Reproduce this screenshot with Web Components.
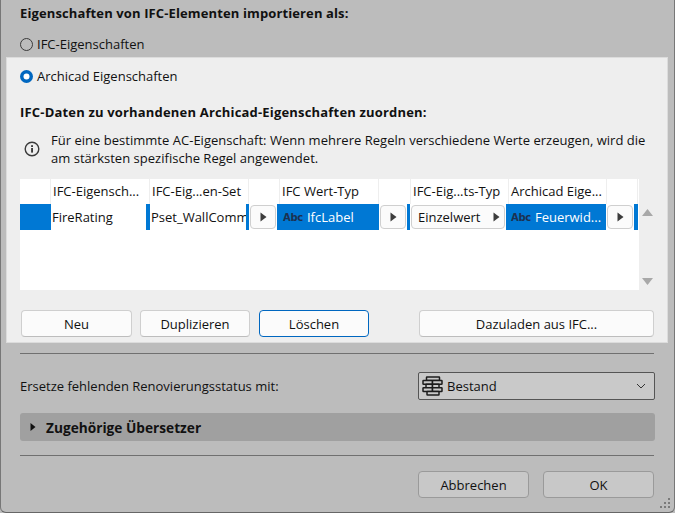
<!DOCTYPE html>
<html lang="de">
<head>
<meta charset="utf-8">
<title>IFC</title>
<style>
  html, body { margin: 0; padding: 0; background: #bcbcbc; }
  body { font-family: "Open Sans", "Noto Sans", sans-serif; font-size: 13px; color: #111; }
</style>
</head>
<body>
<ifc-dialog>
  <span slot="title">Eigenschaften von IFC-Elementen importieren als:</span>
  <ifc-radio slot="radio1">IFC-Eigenschaften</ifc-radio>
  <ifc-panel slot="panel">
    <ifc-radio checked slot="radio">Archicad Eigenschaften</ifc-radio>
    <span slot="heading">IFC-Daten zu vorhandenen Archicad-Eigenschaften zuordnen:</span>
    <span slot="info">Für eine bestimmte AC-Eigenschaft: Wenn mehrere Regeln verschiedene Werte erzeugen, wird die<br>am stärksten spezifische Regel angewendet.</span>
    <ifc-table slot="table"></ifc-table>
    <ifc-button slot="b1" style="width:111px">Neu</ifc-button>
    <ifc-button slot="b2" style="width:110px">Duplizieren</ifc-button>
    <ifc-button slot="b3" focused style="width:110px;margin-left:1px">Löschen</ifc-button>
    <ifc-button slot="b4" style="width:235px">Dazuladen aus IFC...</ifc-button>
  </ifc-panel>
  <span slot="status">Ersetze fehlenden Renovierungsstatus mit:</span>
  <ifc-select slot="select">Bestand</ifc-select>
  <ifc-disclosure slot="disclosure">Zugehörige Übersetzer</ifc-disclosure>
  <ifc-button slot="cancel" dim style="width:111px">Abbrechen</ifc-button>
  <ifc-button slot="ok" dim style="width:111px">OK</ifc-button>
</ifc-dialog>

<script>
class IfcRadio extends HTMLElement {
  constructor() {
    super();
    this.attachShadow({ mode: "open" });
  }
  connectedCallback() {
    const dot = this.hasAttribute("checked")
      ? `<circle cx="6.5" cy="6.5" r="6.5" fill="#0067c0"/><circle cx="6.5" cy="6.5" r="3" fill="#fff"/>`
      : `<circle cx="6.5" cy="6.5" r="6" fill="none" stroke="#3a3a3a"/>`;
    this.shadowRoot.innerHTML = `
      <style>
        :host { display: flex; align-items: center; gap: 4px; height: 20px; }
        svg { flex: none; }
      </style>
      <svg width="13" height="13" viewBox="0 0 13 13">${dot}</svg>
      <slot></slot>
    `;
  }
}
customElements.define("ifc-radio", IfcRadio);

class IfcButton extends HTMLElement {
  constructor() {
    super();
    this.attachShadow({ mode: "open" });
    this.shadowRoot.innerHTML = `
      <style>
        :host {
          display: flex; align-items: center; justify-content: center;
          box-sizing: border-box; height: 27px;
          background: #fbfbfb; border: 1px solid #cfcfcf; border-bottom-color: #bdbdbd;
          border-radius: 4px;
        }
        :host([focused]) { border: 1px solid #0067c0; }
        :host([dim]) { background: #c8c8c8; border-color: #9a9a9a; }
      </style>
      <slot></slot>
    `;
  }
}
customElements.define("ifc-button", IfcButton);

class IfcTable extends HTMLElement {
  constructor() {
    super();
    this.attachShadow({ mode: "open" });
  }
  connectedCallback() {
    const heads = [
      [31, ""], [99, "IFC-Eigensch..."], [99, "IFC-Eig...en-Set"], [31, ""],
      [99, "IFC Wert-Typ"], [32, ""], [98, "IFC-Eig...ts-Typ"], [98, "Archicad Eige..."], [31, ""]
    ];
    const arrow = `<svg width="7" height="10" viewBox="0 0 7 10"><path d="M0.5 0.5 L6.5 5 L0.5 9.5Z" fill="#3c3c3c"/></svg>`;
    const abc = `<b class="abc">Abc</b>`;
    this.shadowRoot.innerHTML = `
      <style>
        :host { display: flex; align-items: stretch; width: 640px; height: 111px; }
        .grid { width: 619px; background: #fff; flex: none; }
        .head { display: flex; height: 25px; }
        .head div {
          box-sizing: border-box; border-right: 1px solid #eee; padding-left: 2px;
          line-height: 25px; white-space: nowrap; overflow: hidden;
        }
        .row { display: flex; height: 26px; }
        .row > * { flex: none; box-sizing: border-box; }
        .sel { background: #0078d4; }
        .txt { line-height: 26px; white-space: nowrap; overflow: hidden; }
        .sel.txt { color: #fff; display: flex; align-items: center; gap: 4px; padding-left: 6px; }
        .abc { font: bold 10px "DejaVu Sans", sans-serif; color: #1c3150; letter-spacing: -0.3px; }
        .btn {
          margin: 1px 0; height: 24px; background: #fbfbfb; border: 1px solid #cfcfcf; border-radius: 4px;
          display: flex; align-items: center; justify-content: center;
        }
        .wide { justify-content: space-between; padding: 0 4px 0 6px; }
        .bar { width: 20px; display: flex; flex-direction: column; justify-content: space-between; align-items: flex-start; padding: 30px 0 5px 3px; box-sizing: border-box; }
      </style>
      <div class="grid">
        <div class="head">${heads.map(h => `<div style="width:${h[0]}px">${h[1]}</div>`).join("")}</div>
        <div class="row">
          <span class="sel" style="width:31px"></span>
          <span class="txt" style="width:95px;padding-left:1px">FireRating</span>
          <span class="sel" style="width:4px"></span>
          <span class="txt" style="width:96px;padding-left:1px">Pset_WallCommon</span>
          <span class="sel" style="width:3px"></span>
          <span class="btn" style="width:26px;margin-left:1px">${arrow}</span>
          <span class="sel txt" style="width:102px;margin-left:1px">${abc}IfcLabel</span>
          <span class="btn" style="width:26px;margin-left:1px">${arrow}</span>
          <span class="sel" style="width:3px;margin-left:1px"></span>
          <span class="btn wide" style="width:94px;margin-left:1px;margin-right:1px">Einzelwert${arrow}</span>
          <span class="sel txt" style="width:100px;padding-left:5px">${abc}Feuerwid...</span>
          <span class="btn" style="width:26px;margin-left:1px">${arrow}</span>
          <span class="sel" style="width:4px;margin-left:1px"></span>
        </div>
      </div>
      <div class="bar">
        <svg width="11" height="7" viewBox="0 0 11 7"><path d="M5.5 0 L11 7 L0 7Z" fill="#a8a8a8"/></svg>
        <svg width="11" height="7" viewBox="0 0 11 7"><path d="M0 0 L11 0 L5.5 7Z" fill="#a8a8a8"/></svg>
      </div>
    `;
  }
}
customElements.define("ifc-table", IfcTable);

class IfcPanel extends HTMLElement {
  constructor() {
    super();
    this.attachShadow({ mode: "open" });
    this.shadowRoot.innerHTML = `
      <style>
        :host {
          display: block; box-sizing: border-box; margin: 0 6px 0 5px; height: 286px;
          background: #eee; border: 1px solid #dcdcdc; padding: 8px 0 0 13px;
        }
        .heading { margin-top: 16px; height: 20px; line-height: 20px; font-weight: 700; letter-spacing: 0.18px; }
        .info { display: flex; align-items: center; gap: 11px; margin: 9px 0 0 4px; height: 36px; line-height: 18px; letter-spacing: 0.02px; }
        .info svg { flex: none; }
        .table { margin-top: 12px; }
        .buttons { display: flex; margin: 20px 0 0 1px; gap: 8px; }
        .last { margin-left: 42px; }
      </style>
      <slot name="radio"></slot>
      <div class="heading"><slot name="heading"></slot></div>
      <div class="info">
        <svg width="16" height="16" viewBox="0 0 16 16">
          <circle cx="8" cy="8" r="6.8" fill="none" stroke="#3a3a3a" stroke-width="1.4"/>
          <rect x="7.1" y="7" width="1.9" height="4.6" fill="#3a3a3a"/>
          <rect x="7.1" y="4.2" width="1.9" height="1.8" fill="#3a3a3a"/>
        </svg>
        <span><slot name="info"></slot></span>
      </div>
      <div class="table"><slot name="table"></slot></div>
      <div class="buttons">
        <slot name="b1"></slot><slot name="b2"></slot><slot name="b3"></slot>
        <span class="last"><slot name="b4"></slot></span>
      </div>
    `;
  }
}
customElements.define("ifc-panel", IfcPanel);

class IfcSelect extends HTMLElement {
  constructor() {
    super();
    this.attachShadow({ mode: "open" });
    this.shadowRoot.innerHTML = `
      <style>
        :host {
          display: flex; align-items: center; box-sizing: border-box;
          width: 237px; height: 28px; background: #c9c9c9;
          border: 1px solid #555; border-radius: 2px; padding: 0 8px 0 3px; gap: 4px;
        }
        .label { flex: 1; }
      </style>
      <svg width="21" height="20" viewBox="0 0 21 20" fill="#c9c9c9" stroke="#1c1c1c" stroke-width="1.5">
        <rect x="4.5" y="1" width="13" height="3.6" rx=".5"/>
        <rect x="1" y="4.6" width="9.5" height="3.6" rx=".5"/>
        <rect x="10.5" y="4.6" width="9.5" height="3.6" rx=".5"/>
        <rect x="4" y="8.2" width="6.5" height="3.6" rx=".5"/>
        <rect x="10.5" y="8.2" width="6.5" height="3.6" rx=".5"/>
        <rect x="1" y="11.8" width="9.5" height="3.6" rx=".5"/>
        <rect x="10.5" y="11.8" width="9.5" height="3.6" rx=".5"/>
        <rect x="5" y="15.4" width="12" height="3.6" rx=".5"/>
      </svg>
      <span class="label"><slot></slot></span>
      <svg width="10" height="6" viewBox="0 0 10 6"><path d="M1 1 L5 5 L9 1" fill="none" stroke="#333"/></svg>
    `;
  }
}
customElements.define("ifc-select", IfcSelect);

class IfcDisclosure extends HTMLElement {
  constructor() {
    super();
    this.attachShadow({ mode: "open" });
    this.shadowRoot.innerHTML = `
      <style>
        :host {
          display: flex; align-items: center; gap: 10px; box-sizing: border-box;
          width: 635px; height: 28px; padding-left: 10px; background: #a0a0a0;
          border-radius: 3px; font-weight: 700; font-size: 13.7px;
        }
      </style>
      <svg width="6" height="8" viewBox="0 0 6 8"><path d="M0.5 0 L5.5 4 L0.5 8Z" fill="#111"/></svg>
      <slot></slot>
    `;
  }
}
customElements.define("ifc-disclosure", IfcDisclosure);

class IfcDialog extends HTMLElement {
  constructor() {
    super();
    this.attachShadow({ mode: "open" });
    this.shadowRoot.innerHTML = `
      <style>
        :host {
          display: block; position: relative; box-sizing: border-box; width: 675px; height: 513px; overflow: hidden;
          background: #bcbcbc; border-left: 1px solid #777; border-bottom: 1px solid #666;
          border-right: 1px solid #777; border-bottom-left-radius: 6px; border-bottom-right-radius: 6px;
        }
        .top { padding: 0 0 0 19px; }
        .title { height: 20px; line-height: 20px; padding-top: 3px; font-weight: 700; letter-spacing: 0.12px; }
        .radio1 { margin-top: 11px; height: 23px; }
        .sec { padding: 0 19px; }
        hr { border: 0; height: 1px; background: #707070; margin: 0; width: 634px; }
        .status { display: flex; align-items: center; justify-content: space-between; margin-top: 18px; height: 28px; width: 635px; }
        .dis { margin-top: 13px; }
        .foot { display: flex; justify-content: flex-end; gap: 14px; margin-top: 15px; width: 634px; }
        .grip { position: absolute; right: 2px; bottom: 2px; }
      </style>
      <div class="top">
        <div class="title"><slot name="title"></slot></div>
        <div class="radio1"><slot name="radio1"></slot></div>
      </div>
      <slot name="panel"></slot>
      <div class="sec">
        <hr style="margin-top:10px">
        <div class="status"><span><slot name="status"></slot></span><slot name="select"></slot></div>
        <div class="dis"><slot name="disclosure"></slot></div>
        <hr style="margin-top:14px">
        <div class="foot"><slot name="cancel"></slot><slot name="ok"></slot></div>
      </div>
      <svg class="grip" width="12" height="12" viewBox="0 0 12 12" fill="#7a7a7a">
        <rect x="8" y="0" width="2" height="2"/><rect x="4" y="4" width="2" height="2"/><rect x="8" y="4" width="2" height="2"/>
        <rect x="0" y="8" width="2" height="2"/><rect x="4" y="8" width="2" height="2"/><rect x="8" y="8" width="2" height="2"/>
      </svg>
    `;
  }
}
customElements.define("ifc-dialog", IfcDialog);
</script>
</body>
</html>
